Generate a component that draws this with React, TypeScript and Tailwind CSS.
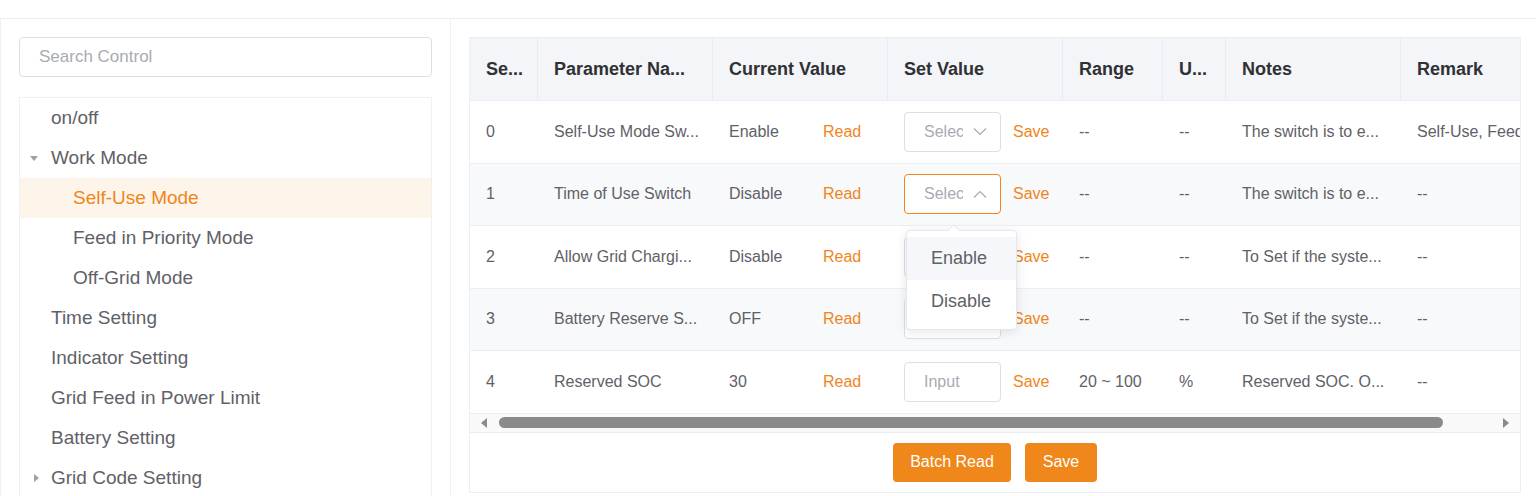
type Row = {
  seq: string;
  name: string;
  current: string;
  kind: "select" | "input";
  range: string;
  unit: string;
  notes: string;
  remark: string;
};

// texts are cut the way the table shows them (column overflow: ellipsis)
const rows: Row[] = [
  {
    seq: "0",
    name: "Self-Use Mode Sw...",
    current: "Enable",
    kind: "select",
    range: "--",
    unit: "--",
    notes: "The switch is to e...",
    remark: "Self-Use, Feed in Priority, Off-Grid",
  },
  {
    seq: "1",
    name: "Time of Use Switch",
    current: "Disable",
    kind: "select",
    range: "--",
    unit: "--",
    notes: "The switch is to e...",
    remark: "--",
  },
  {
    seq: "2",
    name: "Allow Grid Chargi...",
    current: "Disable",
    kind: "select",
    range: "--",
    unit: "--",
    notes: "To Set if the syste...",
    remark: "--",
  },
  {
    seq: "3",
    name: "Battery Reserve S...",
    current: "OFF",
    kind: "select",
    range: "--",
    unit: "--",
    notes: "To Set if the syste...",
    remark: "--",
  },
  {
    seq: "4",
    name: "Reserved SOC",
    current: "30",
    kind: "input",
    range: "20 ~ 100",
    unit: "%",
    notes: "Reserved SOC. O...",
    remark: "--",
  },
];

const tree = [
  { label: "on/off", level: 1, caret: "" },
  { label: "Work Mode", level: 1, caret: "down" },
  { label: "Self-Use Mode", level: 2, caret: "", active: true },
  { label: "Feed in Priority Mode", level: 2, caret: "" },
  { label: "Off-Grid Mode", level: 2, caret: "" },
  { label: "Time Setting", level: 1, caret: "" },
  { label: "Indicator Setting", level: 1, caret: "" },
  { label: "Grid Feed in Power Limit", level: 1, caret: "" },
  { label: "Battery Setting", level: 1, caret: "" },
  { label: "Grid Code Setting", level: 1, caret: "right" },
];

function SelectBox({ open }: { open?: boolean }) {
  return (
    <div
      className={`flex h-10 w-[97px] items-center rounded-sm border bg-white pl-[19px] ${
        open ? "border-[#f0851c]" : "border-[#dcdfe6]"
      }`}
    >
      <span className="w-[39px] overflow-hidden whitespace-nowrap text-[16px] text-[#a8abb2]">Select</span>
      <svg className="ml-[10px] h-[8px] w-[14px]" viewBox="0 0 14 8" fill="none" stroke="#a8abb2" strokeWidth="1.2">
        {open ? <path d="M1 7.5 L7 1.5 L13 7.5" /> : <path d="M1 0.5 L7 6.5 L13 0.5" />}
      </svg>
    </div>
  );
}

export default function App() {
  return (
    <div
      className="h-[496px] w-[1536px] overflow-hidden bg-white text-[#5f6167]"
      style={{ fontFamily: '"Liberation Sans", Arial, sans-serif' }}
    >
      <div className="h-[19px] border-b border-[#eeeeee]" />
      <div className="flex h-[477px]">
        {/* left tree */}
        <div className="w-[451px] shrink-0 border-r border-l border-[#f0f0f0] px-[18px] pt-[18px]">
          <div className="flex h-10 items-center rounded-sm border border-[#dcdfe6] px-[19px] text-[17px] text-[#a8abb2]">
            Search Control
          </div>
          <div className="mt-5 border border-[#f0f0f0]">
            {tree.map((t) => (
              <div
                key={t.label}
                className={`relative flex h-10 items-center text-[19px] ${
                  t.active ? "bg-[#fdf4ea] text-[#f0851c]" : "text-[#5f6167]"
                } ${t.level === 2 ? "pl-[53px]" : "pl-[31px]"}`}
              >
                {t.caret === "down" && (
                  <span className="absolute left-[10px] top-[18px] h-0 w-0 border-x-[4px] border-t-[5px] border-x-transparent border-t-[#a0a0a0]" />
                )}
                {t.caret === "right" && (
                  <span className="absolute left-[14px] top-[16px] h-0 w-0 border-y-[4px] border-l-[5px] border-y-transparent border-l-[#a0a0a0]" />
                )}
                {t.label}
              </div>
            ))}
          </div>
        </div>

        {/* right table */}
        <div className="min-w-0 flex-1 pl-[18px] pr-[15px] pt-[18px]">
          <div className="relative h-[456px] overflow-hidden border border-[#ebeef5]">
            <div className="overflow-hidden">
              <div className="flex h-[63px] w-[1106px] whitespace-nowrap border-b border-[#ebeef5] bg-[#f3f5f9] text-[18px] font-bold text-[#303133]">
                <div className="flex w-[68px] items-center border-r border-[#e8ebf0] px-4">Se...</div>
                <div className="flex w-[175px] items-center border-r border-[#e8ebf0] px-4">Parameter Na...</div>
                <div className="flex w-[175px] items-center border-r border-[#e8ebf0] px-4">Current Value</div>
                <div className="flex w-[175px] items-center border-r border-[#e8ebf0] px-4">Set Value</div>
                <div className="flex w-[100px] items-center border-r border-[#e8ebf0] px-4">Range</div>
                <div className="flex w-[63px] items-center border-r border-[#e8ebf0] px-4">U...</div>
                <div className="flex w-[175px] items-center border-r border-[#e8ebf0] px-4">Notes</div>
                <div className="flex w-[175px] items-center px-4">Remark</div>
              </div>

              {rows.map((r, i) => (
                <div
                  key={r.seq}
                  className={`flex h-[62.5px] w-[1106px] whitespace-nowrap border-b border-[#ebeef5] text-[16px] ${
                    i % 2 === 1 ? "bg-[#f8f9fb]" : "bg-white"
                  }`}
                >
                  <div className="flex w-[68px] items-center px-4">{r.seq}</div>
                  <div className="flex w-[175px] items-center px-4">{r.name}</div>
                  <div className="flex w-[175px] items-center px-4">
                    <span className="w-[94px]">{r.current}</span>
                    <span className="text-[#f0851c]">Read</span>
                  </div>
                  <div className="flex w-[175px] items-center px-4">
                    <div className="relative">
                      {r.kind === "select" ? (
                        <SelectBox open={i === 1} />
                      ) : (
                        <div className="flex h-10 w-[97px] items-center rounded-sm border border-[#dcdfe6] bg-white pl-[19px]">
                          <span className="w-[39px] overflow-hidden whitespace-nowrap text-[16px] text-[#a8abb2]">
                            Input
                          </span>
                        </div>
                      )}
                      {i === 1 && (
                        <div className="absolute left-[2px] top-[56px] z-10 w-[111px] rounded border border-[#e4e7ed] bg-white py-[6px] shadow-[0_2px_12px_rgba(0,0,0,0.1)]">
                          <span className="absolute -top-[5px] left-[42px] h-[9px] w-[9px] rotate-45 border-l border-t border-[#e4e7ed] bg-white" />
                          <div className="flex h-[43px] items-center bg-[#f5f7fa] pl-6 text-[18px] text-[#5f6167]">
                            Enable
                          </div>
                          <div className="flex h-[43px] items-center pl-6 text-[18px] text-[#5f6167]">Disable</div>
                        </div>
                      )}
                    </div>
                    <span className="ml-3 text-[#f0851c]">Save</span>
                  </div>
                  <div className="flex w-[100px] items-center px-4">{r.range}</div>
                  <div className="flex w-[63px] items-center px-4">{r.unit}</div>
                  <div className="flex w-[175px] items-center px-4">{r.notes}</div>
                  <div className="flex w-[175px] items-center overflow-hidden px-4">{r.remark}</div>
                </div>
              ))}
            </div>

            {/* scrollbar */}
            <div className="flex h-[19px] items-center border-b border-[#ededed] bg-[#f9f9f9] px-[11px]">
              <span className="h-0 w-0 border-y-[5px] border-r-[6px] border-y-transparent border-r-[#8a8a8a]" />
              <div className="ml-[12px] h-[11px] w-[944px] rounded-full bg-[#8a8a8a]" />
              <div className="flex-1" />
              <span className="h-0 w-0 border-y-[5px] border-l-[6px] border-y-transparent border-l-[#8a8a8a]" />
            </div>

            {/* footer */}
            <div className="flex justify-center gap-[14px] pt-[10px]">
              <button className="h-[39px] w-[118px] rounded-sm bg-[#ef871b] text-[16px] text-white">Batch Read</button>
              <button className="h-[39px] w-[72px] rounded-sm bg-[#ef871b] text-[16px] text-white">Save</button>
            </div>
          </div>
        </div>
      </div>
    </div>
  );
}
